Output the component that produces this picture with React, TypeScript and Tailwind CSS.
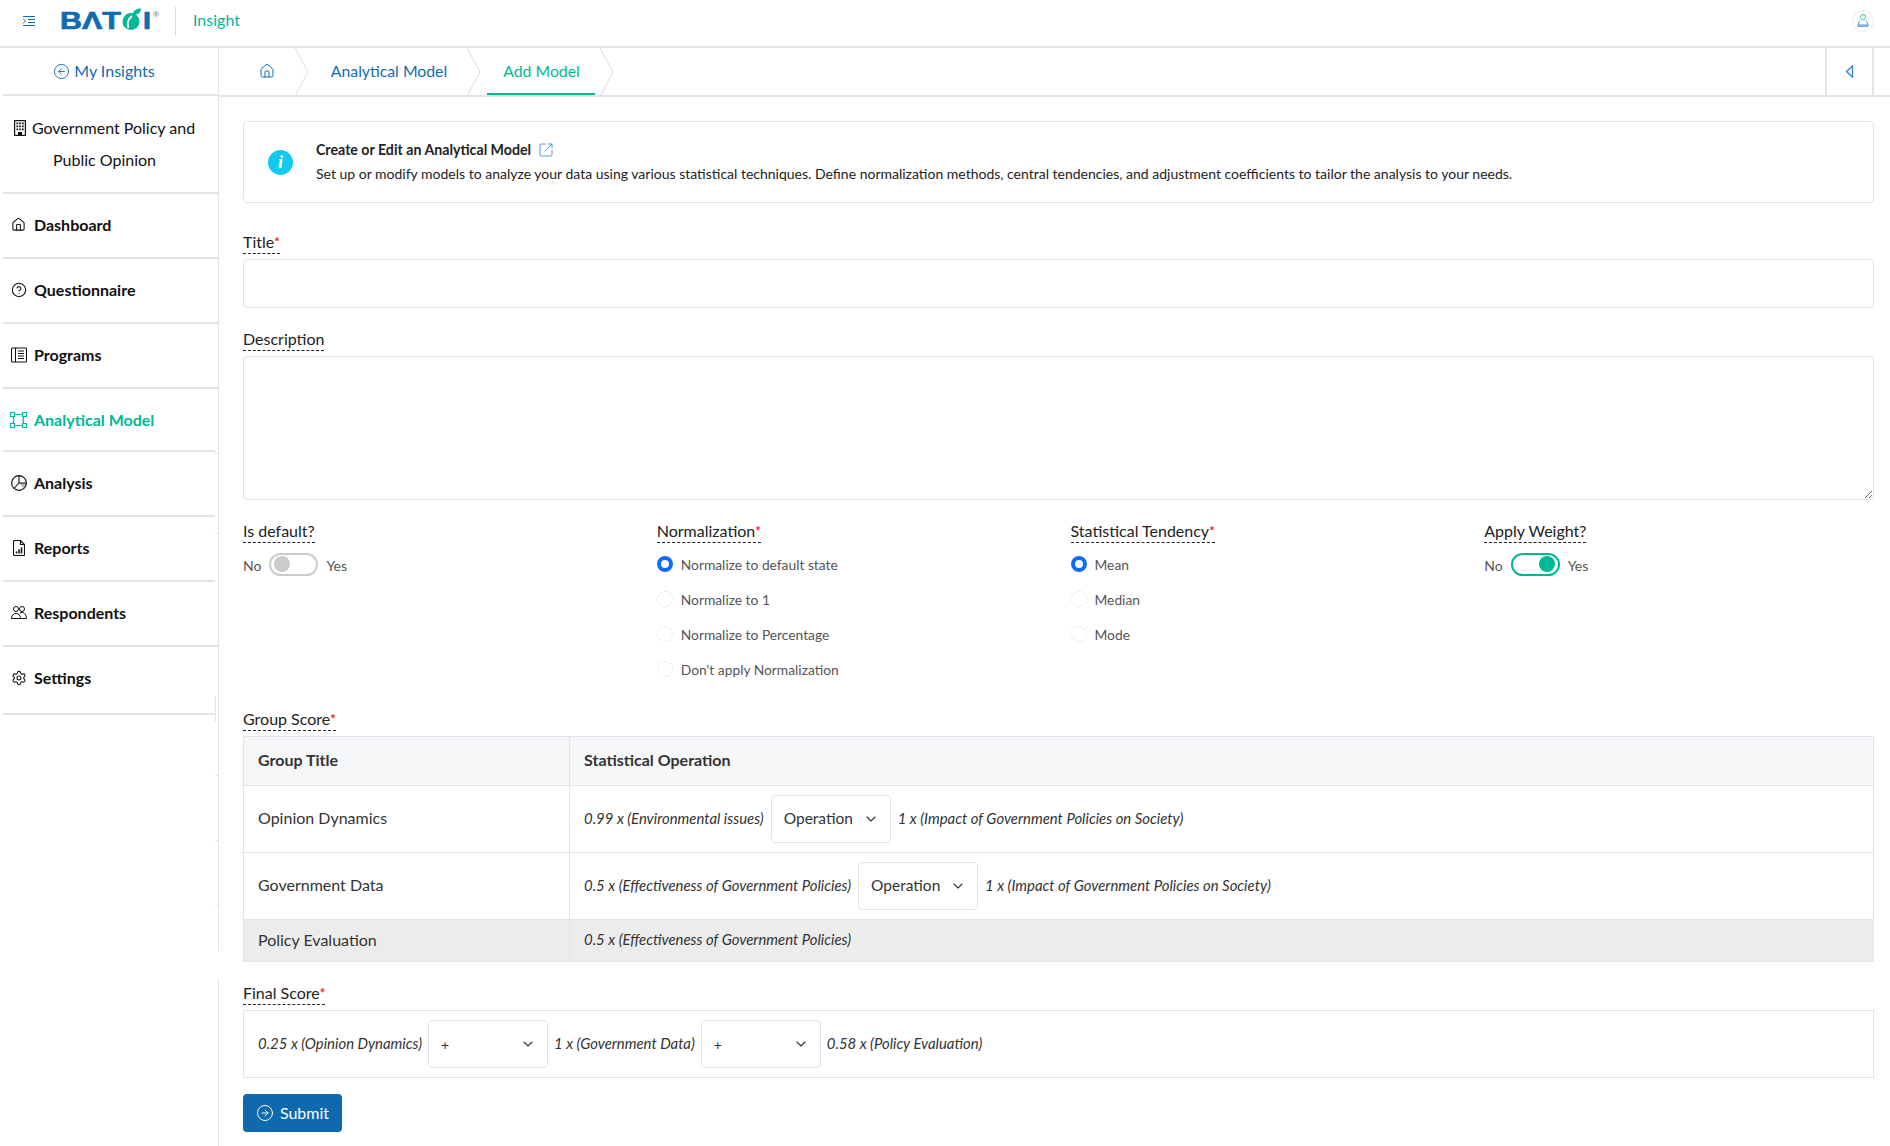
import React from 'react';
import { ChevronDown, CircleArrowLeft, CircleArrowRight, CircleHelp, House, Settings, SquareArrowOutUpRight } from 'lucide-react';

const font = { fontFamily: 'Lato, "Open Sans", sans-serif' };

function MenuIcon() {
  return (
    <svg width="14" height="12" viewBox="0 0 14 12" fill="none" stroke="#0f6cb2" strokeWidth="1">
      <path d="M1 1.500h12M6 4.500h7M6 7.500h7M1 10.500h12M1 3.500l2.500 2.500L1 8.500" />
    </svg>
  );
}

function Logo() {
  return (
    <div className="flex items-center h-[24px] mt-[2px] leading-none text-[#0f6cb2] select-none" style={{ fontFamily: '"Liberation Sans", sans-serif' }}>
      <span className="text-[23px] font-bold inline-block scale-x-[1.32] origin-left w-[63px] [-webkit-text-stroke:0.7px_#0f6cb2]">BΛT</span>
      <svg width="21" height="22" viewBox="0 0 21 22" className="-mt-[5px] -ml-[1px]">
        <circle cx="9" cy="13.500" r="8.500" fill="#00b894" />
        <path d="M6.500 20c-1.500-4-.5-9 3.500-12" stroke="#fff" strokeWidth="2" fill="none" />
        <path d="M11 6.500c0-3.500 3-6 8-6 0 4-3 6.500-8 6z" fill="#00b894" />
      </svg>
      <span className="text-[23px] font-bold inline-block scale-x-[1.25] origin-left w-[9px] [-webkit-text-stroke:0.7px_#0f6cb2]">I</span>
      <span className="text-[8px] self-start mt-[1px] ml-[1px] text-[#5b8fb9] font-bold">®</span>
    </div>
  );
}

function ProgramsIcon() {
  return (
    <svg width="16" height="16" viewBox="0 0 16 16" fill="none" stroke="#111" strokeWidth="1.100">
      <rect x="0.500" y="1" width="15" height="14" rx="1" />
      <path d="M4.500 1v14M7 4h6M7 6.500h6M7 9h6M7 11.500h6" />
    </svg>
  );
}

function ModelIcon() {
  return (
    <svg width="17" height="16" viewBox="0 0 17 16" fill="none" stroke="#00b894" strokeWidth="1.100">
      <rect x="0.500" y="0.500" width="4" height="4" />
      <rect x="12.500" y="0.500" width="4" height="4" />
      <rect x="0.500" y="11.500" width="4" height="4" />
      <rect x="12.500" y="11.500" width="4" height="4" />
      <path d="M4.500 2.500h8M4.500 13.500h8M3 4.500c1 2 1 5 0 7M14 4.500c-1 2-1 5 0 7" />
    </svg>
  );
}

function PieIcon() {
  return (
    <svg width="16" height="16" viewBox="0 0 16 16" fill="none" stroke="#111" strokeWidth="1.100">
      <path d="M8 8h7.500a7.500 7.500 0 0 1-2.500 5.600z" fill="#bbb" stroke="none" />
      <circle cx="8" cy="8" r="7.400" />
      <path d="M8 .5V8h7.500M8 8l-5 5.500" />
    </svg>
  );
}

function ReportIcon() {
  return (
    <svg width="12" height="16" viewBox="0 0 12 16" fill="none" stroke="#111" strokeWidth="1.100">
      <path d="M1.500.5h6l4 4v10a1 1 0 0 1-1 1h-9a1 1 0 0 1-1-1v-13a1 1 0 0 1 1-1z" />
      <path d="M7.500.5v4h4" />
      <path d="M3.500 13.500v-2M6 13.500v-4M8.500 13.500v-6" strokeWidth="1.600" />
    </svg>
  );
}

function PeopleIcon() {
  return (
    <svg width="16" height="13" viewBox="0 0 16 13" fill="none" stroke="#111" strokeWidth="1">
      <circle cx="5" cy="3" r="2.500" />
      <circle cx="11" cy="3" r="2.500" />
      <path d="M.5 12.500c0-3 2-5 4.500-5s4.500 2 4.500 5zM9 7c.6-.3 1.300-.5 2-.5 2.500 0 4.500 2.500 4.500 6H9.500" />
    </svg>
  );
}

function BuildingIcon() {
  return (
    <svg width="12" height="16" viewBox="0 0 12 16">
      <rect x="0.600" y="0.600" width="10.800" height="14.800" fill="none" stroke="#111" strokeWidth="1.200" />
      <path d="M2.500 2.500h1.700v1.700h-1.700zM5.200 2.500h1.700v1.700h-1.700zM8 2.500h1.700v1.700h-1.700zM2.500 5.500h1.700v1.700h-1.700zM5.200 5.500h1.700v1.700h-1.700zM8 5.500h1.700v1.700h-1.700zM2.500 8.500h1.700v1.700h-1.700zM5.200 8.500h1.700v1.700h-1.700zM8 8.500h1.700v1.700h-1.700zM4 12h4v4h-4z" fill="#111" />
    </svg>
  );
}

function UserIcon() {
  return (
    <div className="w-[22px] h-[22px] rounded-full border border-dotted border-[#d5d8df] flex items-center justify-center">
      <svg width="12" height="13" viewBox="0 0 12 13" fill="none">
        <circle cx="6" cy="3.200" r="2.500" stroke="#62d5bb" strokeWidth="1.200" />
        <path d="M3 6.500c-1 1.500-2 3-2 5.800h10c0-2.800-1-4.300-2-5.800M1 11h10" stroke="#4a90cf" strokeWidth="1" />
      </svg>
    </div>
  );
}

const navItems = [
  { label: 'Dashboard', cls: 'h-[65px] pb-[2px]', icon: <House size={15} strokeWidth={1.700} color="#111" /> },
  { label: 'Questionnaire', cls: 'h-[65px] pb-[2px]', icon: <CircleHelp size={16} strokeWidth={1.600} color="#111" /> },
  { label: 'Programs', cls: 'h-[65px] pb-[2px]', icon: <ProgramsIcon /> },
  { label: 'Analytical Model', cls: 'h-[63px] mr-[3px]', icon: <ModelIcon />, active: true },
  { label: 'Analysis', cls: 'h-[65px] mr-[3px] pb-[2px]', icon: <PieIcon /> },
  { label: 'Reports', cls: 'h-[65px] mr-[3px] pb-[2px]', icon: <ReportIcon /> },
  { label: 'Respondents', cls: 'h-[65px] pb-[2px]', icon: <PeopleIcon /> },
  { label: 'Settings', cls: 'h-[68px] mr-[3px] pb-[5px]', icon: <Settings size={16} strokeWidth={1.600} color="#111" /> },
];

// small stubs left over on the sidebar edge
const edgeTicks = ['top-[405px]', 'top-[485px]', 'top-[727px]', 'top-[792px]', 'top-[857px]'];

function Sidebar() {
  return (
    <aside className="relative w-[219px] shrink-0 pl-[3px] border-r border-[#e2e4ea]">
      <div className="h-[48px] flex items-center justify-center gap-[4px] pr-[13px] border-b-2 border-[#e2e4ea] text-[#0f6cb2] text-[16px]">
        <CircleArrowLeft size={17} strokeWidth={1.300} />
        <span>My Insights</span>
      </div>
      <div className="h-[98px] pr-[12px] border-b-2 border-[#e2e4ea] flex flex-col items-center justify-center text-[16px] leading-[32px] text-[#111]">
        <div className="flex items-center gap-[6px]"><BuildingIcon /><span>Government Policy and</span></div>
        <div>Public Opinion</div>
      </div>
      <nav>
        {navItems.map((item) => (
          <div key={item.label} className={`${item.cls} flex items-center border-b-2 border-[#e2e4ea] pl-[7px] gap-[7px] text-[16px] font-bold ${item.active ? 'text-[#00b894]' : 'text-[#111]'}`}>
            <span className="w-[17px] flex justify-center">{item.icon}</span>
            <span>{item.label}</span>
          </div>
        ))}
      </nav>
      {edgeTicks.map((t) => (
        <div key={t} className={`absolute right-0 w-[3px] h-[1px] bg-[#e2e4ea] ${t}`} />
      ))}
      <div className="absolute right-[2px] top-[648px] w-[1px] h-[26px] bg-[#e2e4ea]" />
      <div className="absolute right-[-1px] top-[903px] w-[1px] h-[27px] bg-white" />
    </aside>
  );
}

function Crumb({ children, active, cls }: { children: React.ReactNode; active?: boolean; cls: string }) {
  return (
    <div className={`${cls} relative h-full flex items-center justify-center pb-[2px] text-[15.800px] ${active ? 'text-[#00b894]' : 'text-[#0f6cb2]'}`}>
      {children}
      {active && <div className="absolute left-[6px] right-[19px] bottom-0 h-[2px] bg-[#00b894]" />}
      <svg width="15" height="48" viewBox="0 0 15 48" fill="none" stroke="#e2e4ea" strokeWidth="1.200" className="absolute right-0 top-0">
        <path d="M1 0l13 24L1 48" />
      </svg>
    </div>
  );
}

function Label({ text, required, gap = 'mb-[5px]' }: { text: string; required?: boolean; gap?: string }) {
  return (
    <div className={`h-[21px] ${gap}`}>
      <span className="block w-fit h-[21px] text-[16px] leading-[18px] text-[#222] border-b border-dashed border-[#222]">
        {text}
        {required && <sup className="text-[#f01c1c] font-bold text-[13px] leading-none top-[-1px]">*</sup>}
      </span>
    </div>
  );
}

function Toggle({ on }: { on?: boolean }) {
  return (
    <div className="flex items-center gap-[8px] text-[14px] text-[#555] h-[24px]">
      <span>No</span>
      <div className={`w-[49px] h-[23px] -mt-[2px] rounded-full border-2 flex items-center px-[3px] ${on ? 'border-[#00b894] justify-end' : 'border-[#ccc] justify-start'}`}>
        <div className={`w-[16px] h-[16px] rounded-full ${on ? 'bg-[#00b894]' : 'bg-[#ccc]'}`} />
      </div>
      <span>Yes</span>
    </div>
  );
}

function RadioList({ items }: { items: string[] }) {
  return (
    <div className="flex flex-col gap-[11px]">
      {items.map((t, i) => (
        <div key={t} className="flex items-center gap-[8px] h-[24px] text-[13.800px] text-[#555]">
          {i === 0 ? (
            <span className="w-[16px] h-[16px] -mt-[2px] rounded-full border-[4.500px] border-[#0d6efd] bg-white" />
          ) : (
            <span className="w-[16px] h-[16px] -mt-[2px] rounded-full border border-dashed border-[#e6e7ec]" />
          )}
          <span>{t}</span>
        </div>
      ))}
    </div>
  );
}

function Select({ value }: { value: string }) {
  return (
    <div className={`w-[120px] h-[48px] shrink-0 rounded border border-[#e2e4ea] bg-white flex items-center justify-between pl-[12px] pr-[11px] text-[#333] ${value === '+' ? 'text-[14px]' : 'text-[15.500px]'}`}>
      <span>{value}</span>
      <ChevronDown size={16} strokeWidth={1.600} color="#333" />
    </div>
  );
}

function Formula({ children }: { children: React.ReactNode }) {
  return <span className="italic text-[14.900px] text-[#333] whitespace-nowrap -mt-[2px]">{children}</span>;
}

function GroupRow({ title, cls, head, children }: { title: string; cls: string; head?: boolean; children: React.ReactNode }) {
  return (
    <div className={`${cls} flex border-b border-[#e2e4ea]`}>
      <div className={`w-[326px] shrink-0 border-r border-[#e2e4ea] pl-[14px] pb-[2px] flex items-center text-[16px] text-[#333] ${head ? 'font-bold' : ''}`}>{title}</div>
      <div className="flex-1 flex items-center pl-[14px] gap-[7px]">{children}</div>
    </div>
  );
}

export default function App() {
  return (
    <div className="h-[1146px] w-[1890px] overflow-hidden bg-white flex flex-col" style={font}>
      <header className="h-[48px] shrink-0 border-b-2 border-[#e2e4ea] flex items-center pl-[22px] pr-[16px] pb-[5px]">
        <MenuIcon />
        <div className="ml-[24px] w-[99px]"><Logo /></div>
        <div className="ml-[16px] h-[28px] border-l border-[#d5d8df]" />
        <span className="ml-[17px] -mt-[2px] text-[16px] text-[#00b894]">Insight</span>
        <div className="ml-auto"><UserIcon /></div>
      </header>

      <div className="flex flex-1 min-h-0">
        <Sidebar />
        <main className="flex-1 min-w-0">
          <div className="h-[49px] border-b-2 border-[#e2e4ea] flex items-center">
            <Crumb cls="w-[90px] pl-[6px]"><House size={16} strokeWidth={1.500} /></Crumb>
            <Crumb cls="w-[172px] pr-[12px]">Analytical Model</Crumb>
            <Crumb cls="w-[133px] pr-[12px]" active>Add Model</Crumb>
            <div className="flex-1" />
            <div className="w-[49px] h-full mr-[16px] border-x-2 border-[#e2e4ea] flex items-center justify-center">
              <svg width="9" height="13" viewBox="0 0 9 13" fill="none" stroke="#2f7fce" strokeWidth="1.300"><path d="M7.500 1v11L1.500 6.500z" /></svg>
            </div>
          </div>

          <div className="pl-[24px] pr-[16px] pt-[24px]">
            <div className="h-[82px] rounded border border-[#e2e4ea] flex items-center pl-[24px] gap-[23px]">
              <div className="w-[25px] h-[25px] rounded-full bg-[#12c9ee] text-white flex items-center justify-center italic font-bold text-[18px]" style={{ fontFamily: '"Liberation Serif", serif' }}>i</div>
              <div className="text-[14px] leading-[24px] text-[#222]">
                <div className="flex items-center gap-[7px] font-bold text-[14.200px]">Create or Edit an Analytical Model <SquareArrowOutUpRight size={16} strokeWidth={1.200} color="#2f7fce" /></div>
                <div>Set up or modify models to analyze your data using various statistical techniques. Define normalization methods, central tendencies, and adjustment coefficients to tailor the analysis to your needs.</div>
              </div>
            </div>

            <div className="mt-[30px]"><Label text="Title" required /></div>
            <input className="block w-full h-[49px] rounded border border-[#e2e4ea]" />

            <div className="mt-[22px]"><Label text="Description" /></div>
            <textarea className="block w-full h-[144px] rounded border border-[#e2e4ea]" />

            <div className="mt-[22px] grid grid-cols-4 mr-[-24px]">
              <div><Label text="Is default?" gap="mb-[10px]" /><Toggle /></div>
              <div><Label text="Normalization" required gap="mb-[10px]" /><RadioList items={['Normalize to default state', 'Normalize to 1', 'Normalize to Percentage', "Don't apply Normalization"]} /></div>
              <div><Label text="Statistical Tendency" required gap="mb-[10px]" /><RadioList items={['Mean', 'Median', 'Mode']} /></div>
              <div><Label text="Apply Weight?" gap="mb-[10px]" /><Toggle on /></div>
            </div>

            <div className="mt-[28px]"><Label text="Group Score" required /></div>
            <div className="border border-b-0 border-[#e2e4ea]">
              <GroupRow title="Group Title" cls="h-[49px] bg-[#f6f7f9]" head>
                <span className="font-bold text-[16px] text-[#333] -mt-[2px]">Statistical Operation</span>
              </GroupRow>
              <GroupRow title="Opinion Dynamics" cls="h-[67px]">
                <Formula>0.99 x (Environmental issues)</Formula>
                <Select value="Operation" />
                <Formula>1 x (Impact of Government Policies on Society)</Formula>
              </GroupRow>
              <GroupRow title="Government Data" cls="h-[67px]">
                <Formula>0.5 x (Effectiveness of Government Policies)</Formula>
                <Select value="Operation" />
                <Formula>1 x (Impact of Government Policies on Society)</Formula>
              </GroupRow>
              <GroupRow title="Policy Evaluation" cls="h-[42px] bg-[#ececec]">
                <Formula>0.5 x (Effectiveness of Government Policies)</Formula>
              </GroupRow>
            </div>

            <div className="mt-[22px]"><Label text="Final Score" required /></div>
            <div className="h-[68px] border border-[#e2e4ea] flex items-center pl-[14px] gap-[6px]">
              <Formula>0.25 x (Opinion Dynamics)</Formula>
              <Select value="+" />
              <Formula>1 x (Government Data)</Formula>
              <Select value="+" />
              <Formula>0.58 x (Policy Evaluation)</Formula>
            </div>

            <button className="mt-[16px] h-[38px] w-[99px] rounded bg-[#0f69af] text-white text-[16px] flex items-center justify-center gap-[6px]">
              <CircleArrowRight size={18} strokeWidth={1.300} />
              Submit
            </button>
          </div>
        </main>
      </div>
    </div>
  );
}
